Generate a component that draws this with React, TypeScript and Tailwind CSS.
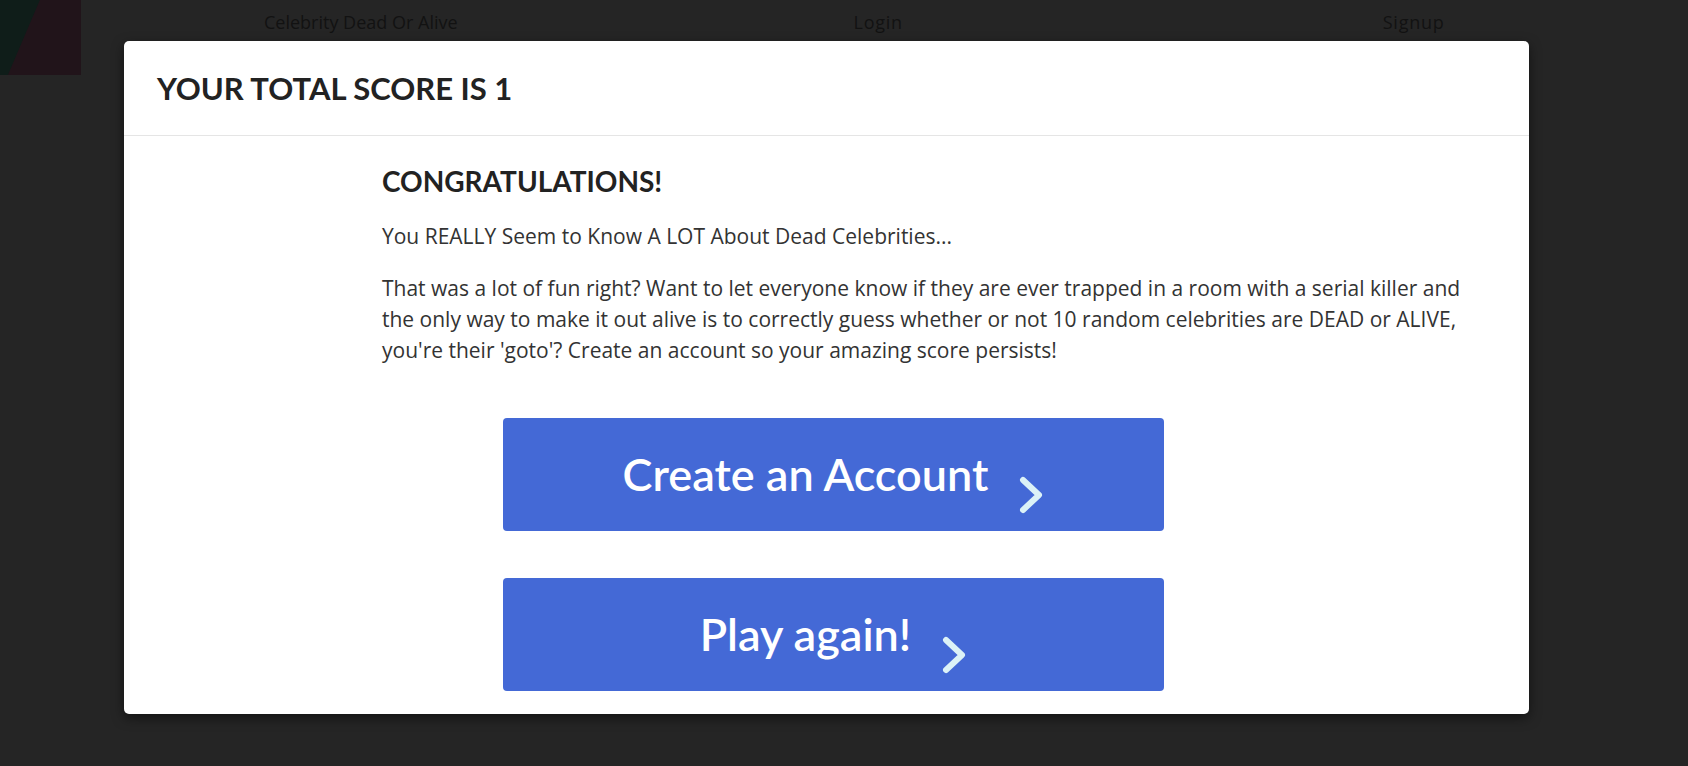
function Logo() {
  return (
    <svg width="81" height="75" viewBox="0 0 81 75" className="block">
      <rect width="81" height="75" fill="#1e1a1c" />
      <polygon points="0,0 40,0 8,75 0,75" fill="#0f1d19" />
      <polygon points="40,0 81,0 81,75 8,75" fill="#21141a" />
    </svg>
  )
}

function NavBar() {
  return (
    <nav className="flex items-start h-[75px] bg-[#252525] font-['Open_Sans',sans-serif] text-[18px] text-[#121212]">
      <Logo />
      <a className="ml-[183px] mt-[9px]">Celebrity Dead Or Alive</a>
      <a className="ml-[396px] mt-[9px] tracking-[0.04em]">Login</a>
      <a className="ml-[480px] mt-[9px] tracking-[0.04em]">Signup</a>
    </nav>
  )
}

function Chevron() {
  return (
    <svg width="26" height="38" viewBox="0 0 26 38" className="ml-[30px] mt-[40px] shrink-0">
      <polyline
        points="5,4 21,19 5,34"
        fill="none"
        stroke="#dcf2f7"
        strokeWidth="6"
        strokeLinecap="round"
        strokeLinejoin="round"
      />
    </svg>
  )
}

function BigButton({ label }: { label: string }) {
  return (
    <button className="flex items-center justify-center w-full h-[113px] rounded-[4px] bg-[#4469d6] text-white font-['Lato',sans-serif] font-semibold text-[45px] leading-none">
      <span>{label}</span>
      <Chevron />
    </button>
  )
}

export default function App() {
  return (
    <div className="relative w-[1688px] h-[766px] overflow-hidden bg-[#252525]">
      <NavBar />

      <div className="absolute inset-0">
        <div className="ml-[124px] mt-[41px] w-[1405px] h-[673px] rounded-[5px] bg-white shadow-[0_4px_12px_rgba(0,0,0,0.5)]">
          <div className="flex items-center h-[95px] px-[33px] border-b border-[#e5e5e5]">
            <h2 className="font-['Lato',sans-serif] font-bold text-[31px] text-[#222]">YOUR TOTAL SCORE IS 1</h2>
          </div>

          <div className="pl-[258px] pr-[20px] pt-[28px]">
            <h3 className="font-['Lato',sans-serif] font-bold text-[28px] text-[#222] leading-[35px]">CONGRATULATIONS!</h3>
            <p className="mt-[22px] font-['Open_Sans',sans-serif] text-[21px] leading-[31px] text-[#333]">
              You REALLY Seem to Know A LOT About Dead Celebrities...
            </p>
            <p className="mt-[21px] font-['Open_Sans',sans-serif] text-[21px] leading-[31px] text-[#333] whitespace-nowrap">
              That was a lot of fun right? Want to let everyone know if they are ever trapped in a room with a serial killer and
              <br />
              the only way to make it out alive is to correctly guess whether or not 10 random celebrities are DEAD or ALIVE,
              <br />
              you're their 'goto'? Create an account so your amazing score persists!
            </p>
          </div>

          <div className="flex flex-col gap-[47px] ml-[379px] w-[661px] mt-[52px]">
            <BigButton label="Create an Account" />
            <BigButton label="Play again!" />
          </div>
        </div>
      </div>
    </div>
  )
}
